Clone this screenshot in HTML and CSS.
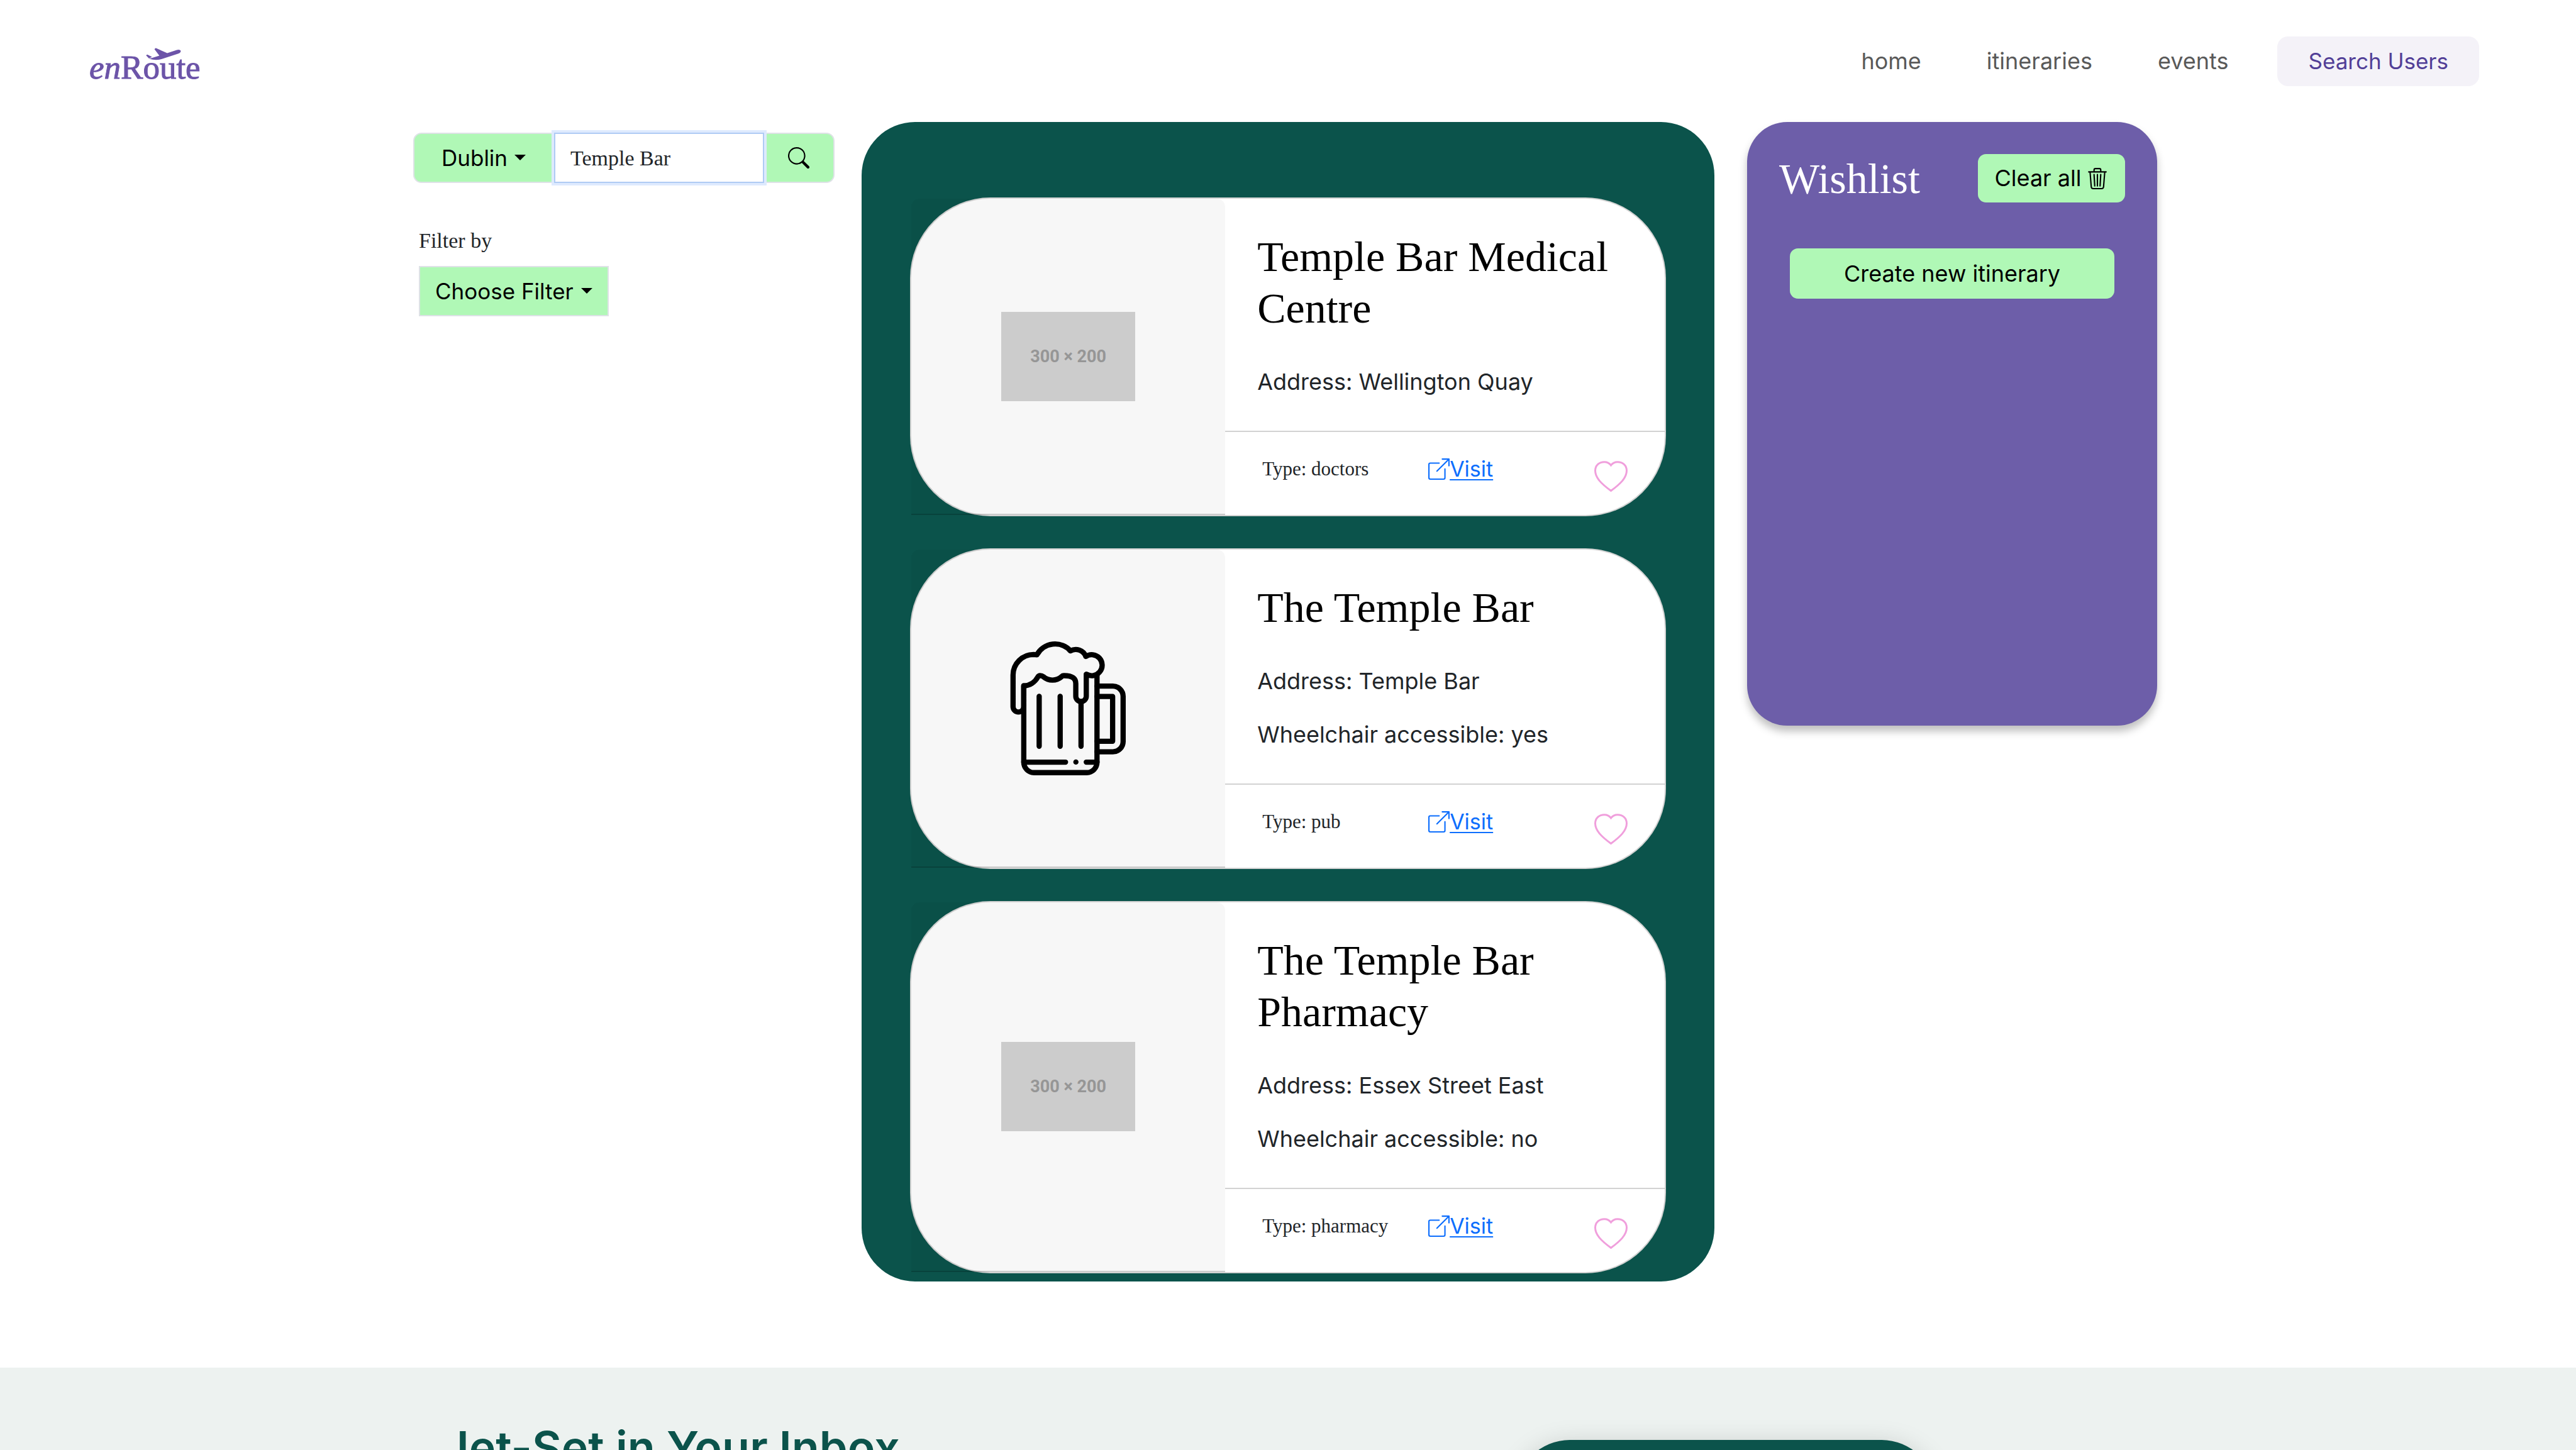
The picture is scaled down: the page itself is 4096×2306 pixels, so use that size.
FILE: index.html
```html
<!DOCTYPE html>
<html lang="en">
<head>
<meta charset="utf-8">
<title>enRoute</title>
<link rel="stylesheet" href="styles.css">
</head>
<body>
<svg class="sprite" aria-hidden="true">
  <symbol id="heart" viewBox="0 0 53 50"><path d="M26.500 7C24 3.500 20 1.700 16 1.700C8 1.700 1.500 7 1.500 15.500C1.500 27 12 37 26.500 47.500C41 37 51.500 27 51.500 15.500C51.500 7 45 1.700 37 1.700C33 1.700 29 3.500 26.500 7Z" fill="none" stroke="currentColor" stroke-width="3"/></symbol>
  <symbol id="external" viewBox="0 0 16 16"><path fill="currentColor" fill-rule="evenodd" d="M8.636 3.500a.5.5 0 0 0-.5-.5H1.500A1.500 1.500 0 0 0 0 4.500v10A1.500 1.500 0 0 0 1.500 16h10a1.500 1.500 0 0 0 1.500-1.500V7.864a.5.5 0 0 0-1 0V14.500a.5.5 0 0 1-.5.5h-10a.5.5 0 0 1-.5-.5v-10a.5.5 0 0 1 .5-.5h6.636a.5.5 0 0 0 .5-.5z"/><path fill="currentColor" fill-rule="evenodd" d="M16 .5a.5.5 0 0 0-.5-.5h-5a.5.5 0 0 0 0 1h3.793L6.146 9.146a.5.5 0 1 0 .708.708L15 1.707V5.500a.5.5 0 0 0 1 0z"/></symbol>
</svg>

<header class="navbar">
  <a class="logo" href="#"><em>en</em>Route
    <svg class="logo-plane" viewBox="705 195 317 110" aria-hidden="true"><path fill="currentColor" d="M782 206L790 197Q794 195 799 198L897 241L983 213Q1010 206 1019 220Q1020 236 997 246L850 294Q795 310 735 293L826 264ZM706 262L718 254L760 276L733 289Z"/></svg>
  </a>
  <nav class="nav">
    <a class="nav-link" href="#">home</a>
    <a class="nav-link" href="#">itineraries</a>
    <a class="nav-link" href="#">events</a>
    <button class="nav-button" type="button">Search Users</button>
  </nav>
</header>

<main class="container">
  <section class="search">
    <form class="search-bar">
      <label class="dropdown dropdown-city"><select class="dropdown-select" aria-label="City"><option>Dublin</option></select></label>
      <input class="search-input" type="text" value="Temple Bar" aria-label="Search places">
      <button class="search-button" type="button" aria-label="Search">
        <svg class="icon" viewBox="0 0 16 16"><path d="M11.742 10.344a6.500 6.500 0 1 0-1.397 1.398h-.001c.03.04.062.078.098.115l3.850 3.850a1 1 0 0 0 1.415-1.414l-3.850-3.850a1.007 1.007 0 0 0-.115-.1zM12 6.500a5.500 5.500 0 1 1-11 0 5.500 5.500 0 0 1 11 0z"/></svg>
      </button>
    </form>
    <div class="filter">
      <label class="filter-label" for="filter">Filter by</label>
      <div class="dropdown dropdown-filter"><select class="dropdown-select" id="filter"><option>Choose Filter</option></select></div>
    </div>
  </section>

  <section class="results">
    <div class="results-panel">
      <article class="card">
        <div class="card-media"><div class="placeholder">300 × 200</div></div>
        <div class="card-content">
          <div class="card-body">
            <h2 class="card-title">Temple Bar Medical Centre</h2>
            <p class="card-text">Address: Wellington Quay</p>
          </div>
          <div class="card-footer">
            <span class="card-type">Type: doctors</span>
            <span class="card-visit"><svg class="icon" aria-hidden="true"><use href="#external"/></svg><a class="visit-link" href="#">Visit</a></span>
            <button class="like" type="button" aria-label="Add to wishlist"><svg class="heart" aria-hidden="true"><use href="#heart"/></svg></button>
          </div>
        </div>
      </article>

      <article class="card">
        <div class="card-media">
          <svg class="mug" viewBox="10 63 1200 1200" role="img" aria-label="Beer mug">
            <g fill="none" stroke="#000" stroke-width="47" stroke-linecap="round" stroke-linejoin="round">
              <path d="M212 461V1145A91 94 0 0 0 303 1239H777A91 94 0 0 0 868 1145V368"/>
              <path d="M212 1145H586M772 1145H868M350 555V1003M538 555V1003M725 602V1003"/>
              <path d="M868 464H1010A92 92 0 0 1 1102 556V960A92 92 0 0 1 1010 1052H868M868 557H1008V958H868"/>
              <path d="M212 648A48 48 0 0 1 116 648V365A184 184 0 0 1 300 181L330 183A185 185 0 0 1 630 148A97 97 0 0 1 768 198A94 94 0 1 1 772 357V555A47 47 0 0 1 678 555V442C678 390 640 370 572 370Q558 370 550 380A125 125 0 0 1 388 380Q375 369 358 369Q345 369 338 382A150 150 0 0 1 212 461Z"/>
            </g>
            <circle cx="679" cy="1144" r="23.500"/>
          </svg>
        </div>
        <div class="card-content">
          <div class="card-body">
            <h2 class="card-title">The Temple Bar</h2>
            <p class="card-text">Address: Temple Bar</p>
            <p class="card-text">Wheelchair accessible: yes</p>
          </div>
          <div class="card-footer">
            <span class="card-type">Type: pub</span>
            <span class="card-visit"><svg class="icon" aria-hidden="true"><use href="#external"/></svg><a class="visit-link" href="#">Visit</a></span>
            <button class="like" type="button" aria-label="Add to wishlist"><svg class="heart" aria-hidden="true"><use href="#heart"/></svg></button>
          </div>
        </div>
      </article>

      <article class="card">
        <div class="card-media"><div class="placeholder">300 × 200</div></div>
        <div class="card-content">
          <div class="card-body">
            <h2 class="card-title">The Temple Bar Pharmacy</h2>
            <p class="card-text">Address: Essex Street East</p>
            <p class="card-text">Wheelchair accessible: no</p>
          </div>
          <div class="card-footer">
            <span class="card-type">Type: pharmacy</span>
            <span class="card-visit"><svg class="icon" aria-hidden="true"><use href="#external"/></svg><a class="visit-link" href="#">Visit</a></span>
            <button class="like" type="button" aria-label="Add to wishlist"><svg class="heart" aria-hidden="true"><use href="#heart"/></svg></button>
          </div>
        </div>
      </article>
    </div>
  </section>

  <aside class="side">
    <div class="wishlist">
      <div class="wishlist-head">
        <h2 class="wishlist-title">Wishlist</h2>
        <button class="clear-button" type="button">Clear all
          <svg class="icon" viewBox="0 0 16 16" aria-hidden="true"><path d="M6.500 1h3a.5.5 0 0 1 .5.5v1H6v-1a.5.5 0 0 1 .5-.5ZM11 2.500v-1A1.500 1.500 0 0 0 9.500 0h-3A1.500 1.500 0 0 0 5 1.500v1H1.500a.5.5 0 0 0 0 1h.538l.853 10.660A2 2 0 0 0 4.885 16h6.230a2 2 0 0 0 1.994-1.840l.853-10.660h.538a.5.5 0 0 0 0-1Zm1.958 1-.846 10.580a1 1 0 0 1-.997.920h-6.230a1 1 0 0 1-.997-.920L3.042 3.500Zm-7.487 1a.5.5 0 0 1 .528.470l.5 8.500a.5.5 0 0 1-.998.060L5 5.030a.5.5 0 0 1 .470-.530Zm5.058 0a.5.5 0 0 1 .470.530l-.5 8.500a.5.5 0 1 1-.998-.060l.5-8.500a.5.5 0 0 1 .528-.470ZM8 4.500a.5.5 0 0 1 .5.5v8.500a.5.5 0 0 1-1 0V5a.5.5 0 0 1 .5-.5Z"/></svg>
        </button>
      </div>
      <button class="create-button" type="button">Create new itinerary</button>
    </div>
  </aside>
</main>

<section class="newsletter">
  <div class="newsletter-inner">
    <h2 class="newsletter-title">Jet-Set in Your Inbox</h2>
    <div class="newsletter-card"></div>
  </div>
</section>
</body>
</html>
```
FILE: styles.css
```css
:root {
  --green: #0b534b;
  --mint: #b0f8b6;
  --purple: #6d5ea9;
  --serif: "Liberation Serif", serif;
  --sans: Inter, sans-serif;
}

* { box-sizing: border-box; }

body {
  margin: 0;
  height: 100vh;
  display: flex;
  flex-direction: column;
  overflow: hidden;
  background: #fff;
  color: #212529;
  font: 400 36px/51px var(--sans);
}

h2, p { margin: 0; font-weight: 400; }

button, input, select { font: inherit; color: inherit; }

button { border: 0; padding: 0; cursor: pointer; }

.sprite { display: none; }

.icon { width: 34px; height: 34px; flex: none; fill: currentColor; }

/* Header */
.navbar {
  display: flex;
  justify-content: space-between;
  align-items: center;
  padding: 58px 154px 57px 142px;
}

.logo {
  position: relative;
  color: #6c54a8;
  font: 400 53px/60px var(--serif);
  -webkit-text-stroke: 1px #6c54a8;
  text-decoration: none;
  padding-top: 18px;
}

.logo-plane {
  position: absolute;
  top: 17px;
  left: 90px;
  width: 56px;
  height: 20px;
}

.nav { display: flex; align-items: center; gap: 52px; }

.nav-link { padding: 0 26px; color: #595959; text-decoration: none; }

.nav-button {
  height: 79px;
  padding: 0 49px;
  border-radius: 17px;
  background: #f4f2f8;
  color: #523f97;
  font-size: 35px;
}

/* Page columns */
.container {
  width: 100%;
  max-width: 2816px;
  margin: 0 auto 137px;
  display: grid;
  grid-template-columns: minmax(0, 3fr) minmax(0, 6fr) minmax(0, 3fr);
  align-items: start;
}

.search { padding: 17px 17px 0; }
.results, .side { padding: 0 26px; }

/* Search */
.search-bar { display: flex; height: 80px; }

.dropdown {
  position: relative;
  display: block;
  height: 80px;
  border: 2px solid #dee2e6;
  background: var(--mint);
  color: #000;
}

.dropdown::after {
  content: "";
  position: absolute;
  top: 33px;
  right: 24px;
  border: 9px solid transparent;
  border-top-color: #000;
  border-bottom: 0;
  pointer-events: none;
}

.dropdown-select {
  appearance: none;
  width: 100%;
  height: 100%;
  padding: 0 24px;
  border: 0;
  background: none;
  font-size: 35px;
}

.dropdown-city { width: 224px; border-radius: 13px 0 0 13px; }
.dropdown-city::after { right: 43px; }
.dropdown-city .dropdown-select { padding: 0 43px; }
.dropdown-filter { width: 302px; }

.search-input {
  flex: 1;
  min-width: 0;
  padding: 0 24px;
  border: 2px solid #afcbf4;
  border-radius: 0;
  outline: none;
  background: #fff;
  box-shadow: 0 0 0 4px #deeafe;
  font-family: var(--serif);
  font-size: 34px;
  z-index: 1;
}

.search-button {
  display: flex;
  justify-content: center;
  align-items: center;
  width: 112px;
  border: 2px solid #dee2e6;
  border-left: 0;
  border-radius: 0 13px 13px 0;
  background: var(--mint);
  color: #000;
}

.filter { padding: 66px 9px 0; }

.filter-label {
  display: block;
  margin-bottom: 15px;
  font-family: var(--serif);
  font-size: 34px;
}

/* Results */
.results-panel {
  display: flex;
  flex-direction: column;
  gap: 51px;
  padding: 120px 77px 13px;
  border-radius: 85px;
  background: var(--green);
}

.card {
  display: grid;
  grid-template-columns: minmax(0, 5fr) minmax(0, 7fr);
  border: 2px solid rgba(0, 0, 0, .175);
  border-radius: 128px;
  background: #fff;
}

.card-media {
  display: flex;
  justify-content: center;
  align-items: center;
  border-bottom: 2px solid rgba(0, 0, 0, .175);
  border-radius: 13px 13px 0 0;
  background: rgba(0, 0, 0, .03);
}

.placeholder {
  width: 213px;
  height: 142px;
  background: #ccc;
  color: #969696;
  font: 700 27px/142px Roboto, sans-serif;
  text-align: center;
}

.mug { width: 213px; height: 213px; }

.card-body {
  display: flex;
  flex-direction: column;
  gap: 34px;
  padding: 51px 51px 52px;
}

.card-title {
  margin-bottom: 17px;
  color: #000;
  font: 400 68px/82px var(--serif);
}

.card-footer {
  display: grid;
  grid-template-columns: 264px 264px 1fr;
  align-items: start;
  height: 134px;
  padding: 33px 0 0 59px;
  border-top: 2px solid rgba(0, 0, 0, .175);
}

.card-type { font-family: var(--serif); font-size: 31px; }

.card-visit { display: flex; align-items: center; color: #0d6efd; }

.visit-link {
  color: inherit;
  font-size: 34px;
  text-decoration-thickness: 2px;
  text-underline-offset: 4px;
}

.like {
  justify-self: start;
  display: flex;
  padding-top: 13px;
  background: none;
  color: #f09fdc;
}

.heart { width: 53px; height: 50px; }

/* Wishlist */
.wishlist {
  min-height: 960px;
  padding: 51px;
  border-radius: 64px;
  background: var(--purple);
  box-shadow: 0 9px 13px rgba(0, 0, 0, .25);
}

.wishlist-head {
  display: flex;
  justify-content: space-between;
  align-items: center;
  height: 77px;
  margin-bottom: 73px;
}

.wishlist-title { color: #fff; font: 400 68px/82px var(--serif); }

.clear-button {
  display: flex;
  justify-content: center;
  align-items: center;
  gap: 9px;
  width: 234px;
  height: 77px;
  border-radius: 13px;
  background: var(--mint);
  color: #000;
}

.create-button {
  display: block;
  width: calc(100% - 34px);
  height: 80px;
  margin: 0 auto;
  border-radius: 13px;
  background: var(--mint);
  color: #000;
}

/* Newsletter */
.newsletter {
  flex: 1;
  min-height: 0;
  overflow: hidden;
  background: #edf2f0;
}

.newsletter-inner {
  display: grid;
  grid-template-columns: 1fr 1fr;
  max-width: 2784px;
  margin: 0 auto;
}

.newsletter-title {
  padding: 86px 0 0 48px;
  color: var(--green);
  font: 600 72px/82px var(--sans);
}

.newsletter-card {
  justify-self: center;
  width: 666px;
  height: 400px;
  margin-top: 115px;
  border-radius: 85px;
  background: var(--green);
  box-shadow: 0 9px 43px rgba(0, 0, 0, .18);
}
```
